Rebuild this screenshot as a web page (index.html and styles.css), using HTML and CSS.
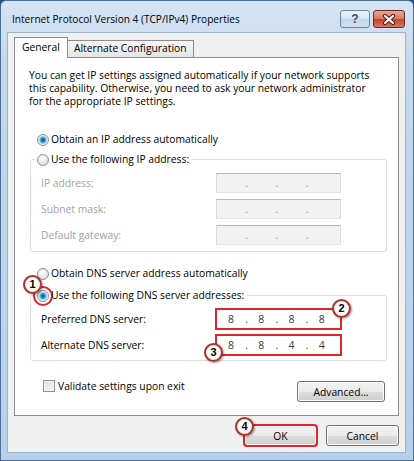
FILE: index.html
```html
<!DOCTYPE html>
<html lang="en">
<head>
    <meta charset="UTF-8">
    <meta name="viewport" content="width=device-width, initial-scale=1.0">
    <title>Internet Protocol Version 4 (TCP/IPv4) Properties</title>
    <link rel="stylesheet" href="styles.css">
</head>
<body>
    <div class="window">
        <div class="titlebar">
            <span class="title">Internet Protocol Version 4 (TCP/IPv4) Properties</span>
            <div class="caption-buttons">
                <span class="cap-btn help">?</span>
                <span class="cap-btn close">
                    <svg width="14" height="11" viewBox="0 0 14 11">
                        <path d="M3 2 L11 9 M11 2 L3 9" stroke="#4a1d15" stroke-width="4.2" stroke-linecap="round"/>
                        <path d="M3 2 L11 9 M11 2 L3 9" stroke="#fff" stroke-width="2.2" stroke-linecap="round"/>
                    </svg>
                </span>
            </div>
        </div>

        <div class="client">
            <div class="tabs">
                <span class="tab active">General</span>
                <span class="tab">Alternate Configuration</span>
            </div>

            <div class="panel">
                <p class="intro">You can get IP settings assigned automatically if your network supports<br>this capability. Otherwise, you need to ask your network administrator<br>for the appropriate IP settings.</p>

                <div class="option auto-ip"><span class="radio checked"></span>Obtain an IP address automatically</div>

                <fieldset class="group">
                    <legend class="option"><span class="radio"></span>Use the following IP address:</legend>
                    <div class="field disabled">
                        <span class="label">IP address:</span>
                        <span class="ipbox"><span class="oct"></span><span class="dot">.</span><span class="oct"></span><span class="dot">.</span><span class="oct"></span><span class="dot">.</span><span class="oct"></span></span>
                    </div>
                    <div class="field disabled">
                        <span class="label">Subnet mask:</span>
                        <span class="ipbox"><span class="oct"></span><span class="dot">.</span><span class="oct"></span><span class="dot">.</span><span class="oct"></span><span class="dot">.</span><span class="oct"></span></span>
                    </div>
                    <div class="field disabled">
                        <span class="label">Default gateway:</span>
                        <span class="ipbox"><span class="oct"></span><span class="dot">.</span><span class="oct"></span><span class="dot">.</span><span class="oct"></span><span class="dot">.</span><span class="oct"></span></span>
                    </div>
                </fieldset>

                <div class="option auto-dns"><span class="radio"></span>Obtain DNS server address automatically</div>

                <fieldset class="group dns">
                    <legend class="option"><span class="radio checked marked"></span>Use the following DNS server addresses:</legend>
                    <div class="field">
                        <span class="label">Preferred DNS server:</span>
                        <span class="ipbox marked"><span class="oct">8</span><span class="dot">.</span><span class="oct">8</span><span class="dot">.</span><span class="oct">8</span><span class="dot">.</span><span class="oct">8</span></span>
                    </div>
                    <div class="field">
                        <span class="label">Alternate DNS server:</span>
                        <span class="ipbox marked"><span class="oct">8</span><span class="dot">.</span><span class="oct">8</span><span class="dot">.</span><span class="oct">4</span><span class="dot">.</span><span class="oct">4</span></span>
                    </div>
                </fieldset>

                <div class="panel-foot">
                    <div class="check"><span class="checkbox"></span>Validate settings upon exit</div>
                    <button type="button" class="btn advanced">Advanced...</button>
                </div>
            </div>

            <div class="actions">
                <button type="button" class="btn ok">OK</button>
                <button type="button" class="btn">Cancel</button>
            </div>
        </div>

        <!-- step markers -->
        <span class="badge b1">1</span>
        <span class="badge b2">2</span>
        <span class="badge b3">3</span>
        <span class="badge b4">4</span>
    </div>
</body>
</html>
```

FILE: styles.css
```css
body {
    margin: 0;
    background-color: #1f4e7f;
    font-family: "Open Sans", "Noto Sans", sans-serif;
    font-size: 10.3px;
    color: #000;
}

.window {
    position: relative;
    width: 414px;
    height: 461px;
    box-sizing: border-box;
    border: 1px solid #4d6f96;
    border-radius: 6px 6px 0 0;
    background: linear-gradient(to bottom, #d6e5f4 0, #c4d9ef 60px, #b6d0eb 100%);
    display: flex;
    flex-direction: column;
}

.titlebar {
    height: 32px;
    display: flex;
    justify-content: space-between;
    align-items: flex-start;
}

.title {
    padding: 11px 0 0 11px;
    font-size: 10.1px;
    line-height: 14px;
}

.caption-buttons {
    display: flex;
    gap: 3px;
    margin: 9px 8px 0 0;
}

.cap-btn {
    height: 18px;
    box-sizing: border-box;
    border: 1px solid #6b83a3;
    border-radius: 3px;
    display: flex;
    align-items: center;
    justify-content: center;
}

.help {
    width: 30px;
    background: linear-gradient(#eef4fa, #d5e2f0 50%, #c3d5ea 51%, #d2e1f1);
    color: #34465c;
    font-family: "Liberation Sans", sans-serif;
    font-weight: bold;
    font-size: 12px;
    text-shadow: 0 0 1px #fff;
}

.close {
    width: 32px;
    border-color: #6c2b22;
    background: linear-gradient(#eaa897, #d9765f 50%, #c4432a 51%, #d9775f);
}

.client {
    flex: 1;
    margin: 0 8px 8px 7px;
    background-color: #f0f0f0;
    box-shadow: 0 0 0 1px #9db3cd;
    padding: 4px 6px 0;
    display: flex;
    flex-direction: column;
}

/* tabs */
.tabs {
    display: flex;
    align-items: flex-end;
    height: 20px;
}

.tab {
    height: 17px;
    box-sizing: border-box;
    border: 1px solid #898c95;
    border-bottom: 0;
    padding: 0 6px;
    line-height: 15px;
    background: linear-gradient(#f6f6f6, #e5e5e5);
}

.tab.active {
    height: 21px;
    margin-bottom: -1px;
    margin-right: -1px;
    padding: 0 7px;
    line-height: 19px;
    background: #fff;
    position: relative;
    z-index: 1;
}

.panel {
    height: 359px;
    box-sizing: border-box;
    border: 1px solid #898c95;
    background-color: #fff;
    padding: 11px 0 0 14px;
}

.intro {
    margin: 0;
    line-height: 13px;
}

.option {
    display: flex;
    align-items: center;
    height: 15px;
    line-height: 15px;
}

.auto-ip {
    margin: 24px 0 0 8px;
}

.auto-dns {
    margin: 14px 0 0 8px;
}

.radio {
    width: 12px;
    height: 12px;
    box-sizing: border-box;
    border: 1px solid #8e8f8f;
    border-radius: 50%;
    background: radial-gradient(circle at 40% 35%, #fdfdfd, #d6d6d6);
    margin-right: 2px;
    flex-shrink: 0;
}

.radio.checked {
    background: radial-gradient(circle, #0e3f6d 0, #2278b8 1.5px, #5fb6e6 3px, #cfe6f3 4px, #f4f4f4 5px);
}

.radio.marked {
    outline: 2px solid #e2252b;
    outline-offset: 2px;
}

.group {
    margin: 5px 0 0 1px;
    width: 357px;
    min-width: 0;
    box-sizing: border-box;
    border: 1px solid #d5dfe5;
    border-radius: 3px;
    padding: 6px 45px 6px 4px;
}

.group.dns {
    margin-top: 7px;
    padding-bottom: 5px;
}

.group legend {
    padding: 0 3px 0 2px;
}

.field {
    display: flex;
    align-items: center;
    justify-content: space-between;
    padding-left: 6px;
}

.field + .field {
    margin-top: 6px;
}

.field.disabled .label {
    color: #a2a2a2;
}

.ipbox {
    width: 125px;
    height: 20px;
    box-sizing: border-box;
    border: 1px solid;
    border-color: #abadb3 #dbdfe6 #e3e9ef #e2e3ea;
    background-color: #fff;
    display: flex;
    padding-right: 4px;
    line-height: 18px;
    color: #3a3a3a;
    font-size: 10.5px;
}

.field.disabled .ipbox {
    background-color: #f2f2f2;
    border-color: #b8b8b8 #dadada #e2e2e2 #dadada;
    color: #8a8a8a;
}

.ipbox.marked {
    outline: 2px solid #e2252b;
    outline-offset: -1px;
}

.oct {
    flex: 1;
    text-align: center;
}

.dot {
    width: 2px;
    text-align: center;
}

.panel-foot {
    display: flex;
    justify-content: space-between;
    align-items: flex-start;
    margin-top: 17px;
    padding-right: 13px;
}

.check {
    display: flex;
    align-items: center;
    height: 15px;
    margin-left: 14px;
}

.checkbox {
    width: 12px;
    height: 12px;
    box-sizing: border-box;
    border: 1px solid #8f8f8f;
    background: linear-gradient(135deg, #dcdcdc, #f8f8f8);
    box-shadow: inset 0 0 0 1px #f4f4f4;
    margin-right: 3px;
}

.btn {
    width: 73px;
    height: 21px;
    box-sizing: border-box;
    border: 1px solid #707070;
    border-radius: 3px;
    background: linear-gradient(#f2f2f2, #ebebeb 50%, #dddddd 51%, #cfcfcf);
    box-shadow: inset 0 0 0 1px #fbfbfb;
    font: inherit;
    color: #000;
    padding: 0;
}

.advanced {
    width: 88px;
    margin-top: 3px;
}

.actions {
    display: flex;
    justify-content: flex-end;
    gap: 9px;
    margin-top: 9px;
}

.ok {
    border-color: #3c7fb1;
    outline: 2px solid #e2252b;
    outline-offset: -1px;
}

.badge {
    position: absolute;
    width: 19px;
    height: 19px;
    box-sizing: border-box;
    border: 2px solid #a8342c;
    border-radius: 50%;
    background: radial-gradient(circle, #fff 50%, #eadede);
    box-shadow: 1px 1px 2px rgba(0, 0, 0, 0.4);
    font-family: "Liberation Sans", sans-serif;
    font-weight: bold;
    font-size: 11px;
    line-height: 15px;
    text-align: center;
    z-index: 2;
}

.b1 { left: 22px; top: 274px; }
.b2 { left: 331px; top: 298px; }
.b3 { left: 203px; top: 342px; }
.b4 { left: 234px; top: 416px; }
```
